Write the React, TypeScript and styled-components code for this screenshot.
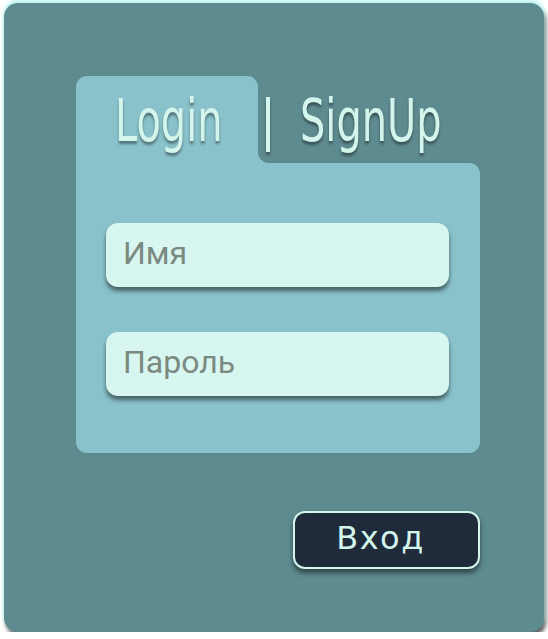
import { FC } from 'react'
import styled, { createGlobalStyle } from 'styled-components'

const GlobalStyle = createGlobalStyle`
	body {
		margin: 0;
		background: #ffffff;
	}
`

const App: FC = () => {
	return (
		<>
			<GlobalStyle />
			<Card>
				<Panel>
					<Tabs>
						<Tab active>
							<TabTitle>Login</TabTitle>
						</Tab>
						<TabSlot>
							<Tab>
								<Divider />
								<TabTitle>SignUp</TabTitle>
							</Tab>
						</TabSlot>
					</Tabs>
					<Body>
						<Field placeholder='Имя' />
						<Field placeholder='Пароль' type='password' />
					</Body>
				</Panel>
				<Actions>
					<SubmitButton>Вход</SubmitButton>
				</Actions>
			</Card>
		</>
	)
}

const Card = styled.div`
	box-sizing: border-box;
	width: 540px;
	height: 629px;
	margin: 3px 0 0 4px;
	padding: 73px 64px 0 72px;
	background: #5e8b90;
	border-radius: 14px;
	box-shadow: 0 -3px 4px #b5f3f0, 2px 4px 4px rgba(0, 0, 0, 0.65);
	display: flex;
	flex-direction: column;
`

const Panel = styled.div`
	display: flex;
	flex-direction: column;
	width: 404px;
`

const Tabs = styled.div`
	display: flex;
	height: 87px;
`

const TabSlot = styled.div`
	flex: 1;
	min-width: 0;
	display: flex;
	background: #89c2cb;
`

const Tab = styled.div<{ active?: boolean }>`
	display: flex;
	align-items: center;
	box-sizing: border-box;
	${(props) =>
		props.active
			? `
		flex: 0 0 182px;
		padding: 3px 0 0 39px;
		background: #89c2cb;
		border-radius: 11px 11px 0 0;
	`
			: `
		flex: 1;
		min-width: 0;
		padding: 3px 0 0 8px;
		background: #5e8b90;
		border-bottom-left-radius: 11px;
	`}
`

const TabTitle = styled.span`
	display: inline-block;
	font-family: 'DejaVu Sans', sans-serif;
	font-stretch: condensed;
	font-size: 58px;
	color: #d3f5ec;
	line-height: 1;
	white-space: nowrap;
	transform: scaleX(0.765);
	transform-origin: left center;
	text-shadow: 0 3px 3px rgba(0, 0, 0, 0.4);
`

const Divider = styled.div`
	flex-shrink: 0;
	width: 4px;
	height: 55px;
	margin: 6px 30px 0 0;
	background: #d3f5ec;
	box-shadow: 0 3px 3px rgba(0, 0, 0, 0.4);
`

const Body = styled.div`
	display: flex;
	flex-direction: column;
	gap: 45px;
	height: 290px;
	box-sizing: border-box;
	padding: 60px 31px 0 30px;
	background: #89c2cb;
	border-radius: 0 11px 11px 11px;
`

const Field = styled.input`
	box-sizing: border-box;
	height: 64px;
	width: 100%;
	padding: 0 0 4px 17px;
	border: none;
	outline: none;
	border-radius: 12px;
	background: #d8f6f0;
	box-shadow: 0 4px 4px rgba(0, 0, 0, 0.5);
	font-family: Roboto, 'Liberation Sans', sans-serif;
	font-size: 32px;

	&::placeholder {
		color: #7b8a81;
	}
`

const Actions = styled.div`
	display: flex;
	justify-content: flex-end;
	width: 404px;
	margin-top: 58px;
`

const SubmitButton = styled.button`
	box-sizing: border-box;
	width: 187px;
	height: 58px;
	padding: 0 12px 4px 0;
	border: 2px solid #d3f5ec;
	border-radius: 12px;
	background: #1f2b3b;
	color: #d3f5ec;
	font-family: 'DejaVu Sans', sans-serif;
	font-size: 32px;
	letter-spacing: 1.5px;
	box-shadow: 0 4px 5px rgba(0, 0, 0, 0.5);
	cursor: pointer;
`

export default App
